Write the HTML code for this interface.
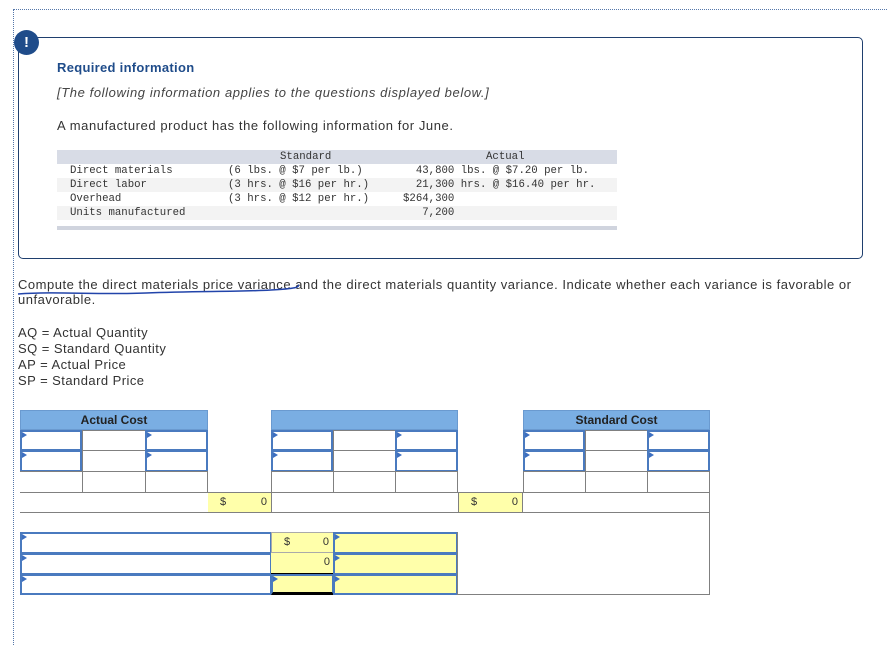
<!DOCTYPE html>
<html><head><meta charset="utf-8"><style>
*{box-sizing:border-box;margin:0;padding:0}
body{width:887px;height:645px;background:#fff;position:relative;overflow:hidden;font-family:"Liberation Sans",sans-serif;color:#333}
.a{position:absolute}
.g{position:absolute;border:1px solid #808080;background:#fff}
.i{position:absolute;border:2px solid #4a7abf;background:#fff}
.i::before{content:"";position:absolute;left:0;top:0;border-left:5px solid #3d6fc0;border-top:3px solid transparent;border-bottom:3px solid transparent}
.y{background:#ffffaa}
.h{position:absolute;background:#7aaee3;border:1px solid #6a9ad0;font-weight:bold;font-size:12px;text-align:center;line-height:18px;color:#222}
.mono{font-family:"Liberation Mono","DejaVu Sans Mono",monospace;font-size:10.7px;color:#333;white-space:pre;line-height:14px}
.n{font-size:11px;color:#333;line-height:18px}
.t{letter-spacing:0.5px}
</style></head><body>
<div class="a" style="left:13px;top:9px;width:874px;height:636px;border-left:1px dotted #5577aa;border-top:1px dotted #5577aa"></div>
<div class="a" style="left:18px;top:37px;width:845px;height:222px;border:1.5px solid #1f3f6e;border-radius:5px"></div>
<div class="a" style="left:14px;top:30px;width:25px;height:25px;border-radius:50%;background:#1f4c8a;color:#fff;font-weight:bold;font-size:15px;text-align:center;line-height:25px">!</div>
<div class="a" style="left:57px;top:60px;font-size:13px;font-weight:bold;color:#1f4c8a;letter-spacing:0.3px">Required information</div>
<div class="a t" style="left:57px;top:85px;font-size:13px;font-style:italic;color:#444;letter-spacing:0.6px">[The following information applies to the questions displayed below.]</div>
<div class="a t" style="left:57px;top:118px;font-size:13px;color:#333;letter-spacing:0.58px">A manufactured product has the following information for June.</div>
<div class="a" style="left:57px;top:150px;width:560px;height:14px;background:#d8dce6"></div>
<div class="a" style="left:57px;top:178px;width:560px;height:14px;background:#f3f3f3"></div>
<div class="a" style="left:57px;top:206px;width:560px;height:14px;background:#f3f3f3"></div>
<div class="a" style="left:57px;top:226px;width:560px;height:4px;background:#d0d4de"></div>
<div class="a mono" style="left:70px;top:150px">
Direct materials
Direct labor
Overhead
Units manufactured</div>
<div class="a mono" style="left:280px;top:150px">Standard</div>
<div class="a mono" style="left:228px;top:164px">(6 lbs. @ $7 per lb.)
(3 hrs. @ $16 per hr.)
(3 hrs. @ $12 per hr.)</div>
<div class="a mono" style="left:486px;top:150px">Actual</div>
<div class="a mono" style="left:403px;top:164px">  43,800 lbs. @ $7.20 per lb.
  21,300 hrs. @ $16.40 per hr.
$264,300
   7,200</div>
<div class="a t" style="left:18px;top:277px;font-size:13px;line-height:15px;color:#333;letter-spacing:0.52px;width:860px">Compute the direct materials price variance and the direct materials quantity variance. Indicate whether each variance is favorable or<br>unfavorable.</div>
<svg class="a" style="left:16px;top:284px" width="290" height="14"><path d="M2 10 C40 7,80 11,130 9 S220 8,255 6 S280 2,283 1" stroke="#2244aa" stroke-width="1.5" fill="none"/></svg>
<div class="a" style="left:18px;top:325px;font-size:13px;line-height:16px;color:#333;letter-spacing:0.45px">AQ = Actual Quantity<br>SQ = Standard Quantity<br>AP = Actual Price<br>SP = Standard Price</div>

<div class="h" style="left:20px;top:410px;width:188px;height:20px">Actual Cost</div>
<div class="h" style="left:271px;top:410px;width:187px;height:20px"></div>
<div class="h" style="left:523px;top:410px;width:187px;height:20px">Standard Cost</div>

<div class="i" style="left:20px;top:430px;width:62px;height:21px"></div><div class="g" style="left:82px;top:430px;width:64px;height:21px"></div><div class="i" style="left:145px;top:430px;width:63px;height:21px"></div>
<div class="i" style="left:20px;top:450px;width:62px;height:22px"></div><div class="g" style="left:82px;top:450px;width:64px;height:22px;border-bottom:1px solid #000"></div><div class="i" style="left:145px;top:450px;width:63px;height:22px"></div>
<div class="i" style="left:271px;top:430px;width:62px;height:21px"></div><div class="g" style="left:333px;top:430px;width:63px;height:21px"></div><div class="i" style="left:395px;top:430px;width:63px;height:21px"></div>
<div class="i" style="left:271px;top:450px;width:62px;height:22px"></div><div class="g" style="left:333px;top:450px;width:63px;height:22px"></div><div class="i" style="left:395px;top:450px;width:63px;height:22px"></div>
<div class="i" style="left:523px;top:430px;width:62px;height:21px"></div><div class="g" style="left:585px;top:430px;width:63px;height:21px"></div><div class="i" style="left:647px;top:430px;width:63px;height:21px"></div>
<div class="i" style="left:523px;top:450px;width:62px;height:22px"></div><div class="g" style="left:585px;top:450px;width:63px;height:22px"></div><div class="i" style="left:647px;top:450px;width:63px;height:22px"></div>
<div class="g" style="left:20px;top:471px;width:63px;height:22px;border-left:none"></div><div class="g" style="left:82px;top:471px;width:64px;height:22px"></div><div class="g" style="left:145px;top:471px;width:63px;height:22px"></div>
<div class="g" style="left:271px;top:471px;width:63px;height:22px"></div><div class="g" style="left:333px;top:471px;width:63px;height:22px"></div><div class="g" style="left:395px;top:471px;width:63px;height:22px"></div>
<div class="g" style="left:523px;top:471px;width:63px;height:22px"></div><div class="g" style="left:585px;top:471px;width:63px;height:22px"></div><div class="g" style="left:647px;top:471px;width:63px;height:22px"></div>
<div class="g" style="left:20px;top:512px;width:690px;height:21px;border-left:none;border-top:none"></div>
<div class="g" style="left:20px;top:492px;width:690px;height:21px;border-left:none;background:transparent"></div>
<div class="a y n" style="left:208px;top:493px;width:63px;height:19px"><span style="position:absolute;left:12px">$</span><span style="position:absolute;right:4px">0</span></div>
<div class="a y n" style="left:458px;top:493px;width:65px;height:19px;border-left:1px solid #808080;border-right:1px solid #808080"><span style="position:absolute;left:12px">$</span><span style="position:absolute;right:4px">0</span></div>
<div class="a" style="left:271px;top:493px;width:1px;height:19px;background:#808080"></div>
<div class="i" style="left:20px;top:532px;width:252px;height:22px"></div>
<div class="a y n" style="left:271px;top:532px;width:63px;height:21px;border:1px solid #aaa"><span style="position:absolute;left:12px">$</span><span style="position:absolute;right:4px">0</span></div>
<div class="i y" style="left:333px;top:532px;width:125px;height:22px"></div>
<div class="i" style="left:20px;top:553px;width:252px;height:22px"></div>
<div class="a y n" style="left:271px;top:553px;width:63px;height:21px;border-bottom:1px solid #000"><span style="position:absolute;right:4px">0</span></div>
<div class="i y" style="left:333px;top:553px;width:125px;height:22px"></div>
<div class="i" style="left:20px;top:574px;width:252px;height:21px"></div>
<div class="i y" style="left:271px;top:574px;width:63px;height:21px;border-bottom:3px solid #000"></div>
<div class="i y" style="left:333px;top:574px;width:125px;height:21px"></div>
<div class="g" style="left:457px;top:532px;width:253px;height:63px;border-top:none"></div>
</body></html>
